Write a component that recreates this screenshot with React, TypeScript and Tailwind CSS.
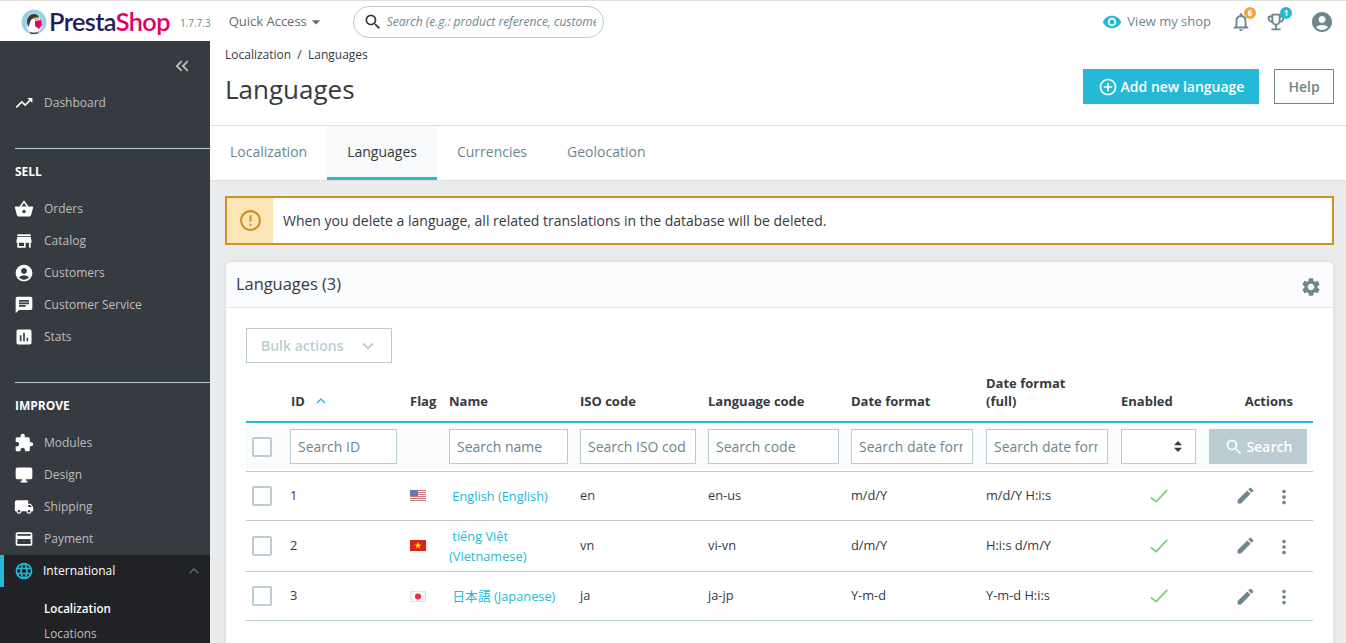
import React from "react";
import {
  MdTrendingUp, MdShoppingBasket, MdStore, MdAccountCircle, MdChat, MdAssessment, MdExtension,
  MdDesktopWindows, MdLocalShipping, MdCreditCard, MdLanguage, MdExpandLess, MdKeyboardDoubleArrowLeft,
  MdNotificationsNone, MdOutlineEmojiEvents, MdVisibility, MdAddCircleOutline, MdErrorOutline, MdSettings,
  MdSearch, MdEdit, MdMoreVert, MdArrowDropDown, MdExpandMore,
} from "react-icons/md";

const font = { fontFamily: '"Open Sans", "Noto Sans CJK JP", sans-serif' };

function NavItem({ icon: Icon, label }: { icon: any; label: string }) {
  return (
    <div className="flex h-8 items-center pl-[14px]">
      <Icon className="h-5 w-5 text-white" />
      <span className="ml-[10px] text-[12px] text-[#bebebe]">{label}</span>
    </div>
  );
}

function Section({ label }: { label: string }) {
  return (
    <div className="ml-[15px] flex h-[45px] items-center border-t border-[#bbcdd2] pt-[1px] text-[12px] font-bold text-white">{label}</div>
  );
}

function Logo() {
  return (
    <svg width="26" height="26" viewBox="0 0 26 26">
      <circle cx="13" cy="13" r="12.5" fill="#9ad3e3" />
      <path d="M6 12c0-5 4-8 8-7 3 .5 5 3 5 6l2 6c-1 4-4 7-8 7-4 0-6-2-7-5z" fill="#fff" />
      <path d="M6 13c0-5 3-8 7-8 3 0 5 2 5 4-3-1-6 0-8 2-1 2-2 5-2 7-1-1-2-3-2-5z" fill="#3a3a44" />
      <path d="M14 12l6-1 1 5-3 4-4-3z" fill="#df0067" />
      <path d="M13 9l4-.5 1 2-4 1z" fill="#f4b13c" />
      <path d="M8 22c2 2 8 2 10 0l-2 3h-6z" fill="#5a4a3c" />
    </svg>
  );
}

function UsFlag() {
  return (
    <svg width="16" height="11" viewBox="0 0 16 11" className="block">
      <rect width="16" height="11" fill="#f4eeee" />
      {[0, 2, 4, 6, 8, 10].map((y) => (
        <rect key={y} y={y} width="16" height="1" fill="#c97a7a" />
      ))}
      <rect width="8" height="6" fill="#6a76b0" />
    </svg>
  );
}
function VnFlag() {
  return (
    <svg width="16" height="11" viewBox="0 0 16 11" className="block">
      <rect width="16" height="11" fill="#da251d" />
      <path d="M8 2l.9 2.4h2.5l-2 1.6.8 2.5L8 7l-2.2 1.5.8-2.5-2-1.6h2.5z" fill="#ffe600" />
    </svg>
  );
}
function JpFlag() {
  return (
    <svg width="16" height="11" viewBox="0 0 16 11" className="block">
      <rect width="16" height="11" fill="#f5f5f5" />
      <rect x="0.5" y="0.5" width="15" height="10" fill="none" stroke="#e4e4e4" />
      <circle cx="8" cy="5.5" r="3" fill="#ee2b3a" />
    </svg>
  );
}

function Check() {
  return (
    <svg width="18" height="14" viewBox="0 0 18 14" fill="none" className="block">
      <path d="M0.7 8.5L6.2 12.6L17.2 0.8" stroke="#78d07d" strokeWidth="1.8" />
    </svg>
  );
}

function SortArrows() {
  return (
    <svg width="8" height="11" viewBox="0 0 8 11" className="block">
      <path d="M4 0L8 4.2H0z M0 6.8H8L4 11z" fill="#363a41" />
    </svg>
  );
}

function Box() {
  return <div className="h-5 w-5 rounded-[2px] border-2 border-[#bbcdd2] bg-white" />;
}

function Filter({ ph, w }: { ph: string; w: string }) {
  return (
    <input
      readOnly
      placeholder={ph}
      className={`h-[35px] ${w} border border-[#bbcdd2] bg-white pl-[7px] pr-[9px] text-[14px] text-[#363a41] outline-none placeholder:text-[#6c868e]`}
    />
  );
}

const th = "px-1.5 pb-[11px] text-left align-bottom text-[13px] font-bold leading-[18px] text-[#363a41]";
const td = "px-1.5 text-[12.8px] text-[#363a41]";

function Row({ id, flag, name, iso, code, df, dff, h, pad }: any) {
  return (
    <tr className={`${h} border-b border-[#bbcdd2]`}>
      <td className={`px-1.5 ${pad}`}><Box /></td>
      <td className={`${td} ${pad}`}>{id}</td>
      <td className={`px-1.5 ${pad}`}>{flag}</td>
      <td className={`px-1.5 text-[12.8px] leading-[20px] text-[#25b9d7] ${pad}`}>{name}</td>
      <td className={`${td} ${pad}`}>{iso}</td>
      <td className={`${td} ${pad}`}>{code}</td>
      <td className={`${td} ${pad}`}>{df}</td>
      <td className={`${td} ${pad}`}>{dff}</td>
      <td className={`px-1.5 ${pad}`}>
        <div className="flex justify-center"><Check /></div>
      </td>
      <td className={`px-1.5 ${pad}`}>
        <div className="flex items-center pl-[26px] text-[#6c868e]">
          <MdEdit className="h-[21px] w-[21px]" />
          <MdMoreVert className="ml-[17px] h-[22px] w-[22px] translate-y-[1px]" />
        </div>
      </td>
    </tr>
  );
}

export default function App() {
  return (
    <div className="flex h-[643px] w-[1346px] flex-col overflow-hidden bg-[#eaebec]" style={font}>
      {/* top bar */}
      <header className="flex h-[41px] shrink-0 items-center border-t border-[#dfdfdf] bg-white pt-[1px]">
        <div className="ml-[21px] flex items-center">
          <Logo />
          <span className="ml-[2px] text-[25.3px] font-semibold leading-none tracking-[-0.6px]" style={{ fontFamily: 'Lato, sans-serif' }}>
            <span className="text-[#251b5b]">Presta</span><span className="text-[#df0067]">Shop</span>
          </span>
        </div>
        <span className="ml-[10px] mt-[3px] text-[10px] text-[#6c868e]">1.7.7.3</span>
        <div className="ml-[18px] flex items-center text-[13px] text-[#5f6b70]">
          Quick Access
          <MdArrowDropDown className="-ml-[1px] h-[20px] w-[20px]" />
        </div>
        <div className="ml-[27px] flex h-8 w-[251px] items-center rounded-full border border-[#bbcdd2] pl-[9px] pr-[7px]">
          <MdSearch className="h-[20px] w-[20px] shrink-0 text-[#363a41]" />
          <input readOnly placeholder="Search (e.g.: product reference, customer name…)" className="ml-[4px] min-w-0 flex-1 text-[12px] italic outline-none placeholder:text-[#6c868e]" />
        </div>
        <div className="ml-auto flex items-center pr-[12px]">
          <MdVisibility className="h-[20px] w-[20px] text-[#25b9d7]" />
          <span className="ml-[5px] text-[13px] text-[#6c868e]">View my shop</span>
          <div className="relative ml-[19px] h-[22px] w-[22px]">
            <MdNotificationsNone className="h-[22px] w-[22px] text-[#6c868e]" />
            <span className="absolute -right-[4px] -top-[4px] flex h-[12px] w-[12px] items-center justify-center rounded-full bg-[#f5a53a] text-[8px] font-bold text-white">6</span>
          </div>
          <div className="relative ml-[13px] h-[22px] w-[22px]">
            <MdOutlineEmojiEvents className="h-[22px] w-[22px] text-[#6c868e]" />
            <span className="absolute -right-[5px] -top-[4px] flex h-[12px] w-[12px] items-center justify-center rounded-full bg-[#25b9d7] text-[8px] font-bold text-white">1</span>
          </div>
          <MdAccountCircle className="ml-[23px] h-6 w-6 text-[#6c868e]" />
        </div>
      </header>

      <div className="flex min-h-0 flex-1">
        {/* sidebar */}
        <aside className="w-[210px] shrink-0 overflow-hidden bg-[#363a41]">
          <div className="flex h-[46px] items-center justify-end pr-[17px] pt-[4px]">
            <MdKeyboardDoubleArrowLeft className="h-[22px] w-[22px] text-[#bebebe]" />
          </div>
          <NavItem icon={MdTrendingUp} label="Dashboard" />
          <div className="h-[29px]" />
          <Section label="SELL" />
          <NavItem icon={MdShoppingBasket} label="Orders" />
          <NavItem icon={MdStore} label="Catalog" />
          <NavItem icon={MdAccountCircle} label="Customers" />
          <NavItem icon={MdChat} label="Customer Service" />
          <NavItem icon={MdAssessment} label="Stats" />
          <div className="h-[29px]" />
          <Section label="IMPROVE" />
          <NavItem icon={MdExtension} label="Modules" />
          <NavItem icon={MdDesktopWindows} label="Design" />
          <NavItem icon={MdLocalShipping} label="Shipping" />
          <NavItem icon={MdCreditCard} label="Payment" />
          <div className="bg-[#202226] pb-4">
            <div className="flex h-8 items-center border-l-4 border-[#25b9d7] pl-[10px] pr-[6px]">
              <MdLanguage className="h-5 w-5 text-[#25b9d7]" />
              <span className="ml-[9px] text-[12px] text-white">International</span>
              <MdExpandLess className="ml-auto h-[20px] w-[20px] text-[#4f6b72]" />
            </div>
            <div className="mt-[10px] pl-[44px] text-[11.6px] font-semibold leading-[24px] text-white">Localization</div>
            <div className="pl-[44px] text-[11.8px] leading-[24px] text-[#bebebe]">Locations</div>
          </div>
        </aside>

        {/* main */}
        <main className="min-w-0 flex-1 overflow-hidden">
          <div className="flex h-[85px] justify-between border-b border-[#dfdfdf] bg-white pl-[15px] pr-[12px]">
            <div>
              <div className="mt-[5px] text-[12px] leading-[18px] text-[#363a41]">Localization&nbsp; /&nbsp; Languages</div>
              <h1 className="mt-[7px] text-[26px] font-normal leading-[36px] text-[#363a41]">Languages</h1>
            </div>
            <div className="mt-[28px] flex h-[35px] items-center gap-[15px]">
              <div className="flex h-[35px] w-[176px] items-center justify-center bg-[#25b9d7] text-[14px] font-semibold text-white">
                <MdAddCircleOutline className="mr-[3px] h-[20px] w-[20px]" />
                Add new language
              </div>
              <div className="flex h-[35px] w-[60px] items-center justify-center border border-[#6c868e] text-[14px] font-semibold text-[#6c868e]">Help</div>
            </div>
          </div>

          <nav className="flex h-[55px] border-b border-[#dfdfdf] bg-white text-[14px] text-[#6c868e]">
            <div className="flex items-center px-5 pb-[4px]">Localization</div>
            <div className="flex items-center border-b-[3px] border-[#25b9d7] bg-[#f8f9fa] px-5 pb-[1px] text-[#363a41]">Languages</div>
            <div className="flex items-center px-5 pb-[4px]">Currencies</div>
            <div className="flex items-center px-5 pb-[4px]">Geolocation</div>
          </nav>

          <div className="mx-[15px] mt-[15px] flex h-[49px] w-[1109px] border-2 border-[#cd9321] bg-white">
            <div className="flex w-[46px] items-center justify-center bg-[#fde5b8]">
              <MdErrorOutline className="h-[25px] w-[25px] text-[#cd9321]" />
            </div>
            <div className="ml-[10px] flex items-center text-[14px] text-[#363a41]">When you delete a language, all related translations in the database will be deleted.</div>
          </div>

          <section className="ml-[16px] mt-[17px] w-[1107px] rounded-[5px] bg-white shadow-[0_0_4px_rgba(0,0,0,0.1)]">
            <div className="flex h-[46px] items-center justify-between rounded-t-[5px] border-b border-[#dbe6e9] bg-[#fafbfc] pl-[10px] pr-[11px]">
              <span className="text-[16.4px] text-[#363a41]">Languages (3)</span>
              <MdSettings className="mt-[5px] h-[22px] w-[22px] text-[#6c868e]" />
            </div>
            <div className="px-5 pt-[20px] pb-10">
              <div className="flex h-[35px] w-[146px] items-center justify-between border border-[#bbcdd2] pl-[14px] pr-[12px] text-[14px] font-semibold text-[#bbcdd2]">
                Bulk actions
                <MdExpandMore className="h-[22px] w-[22px]" />
              </div>
              <table className="mt-[10px] w-[1067px] table-fixed border-collapse">
                <colgroup>
                  <col className="w-[38px]" />
                  <col className="w-[120px]" />
                  <col className="w-[39px]" />
                  <col className="w-[131px]" />
                  <col className="w-[128px]" />
                  <col className="w-[143px]" />
                  <col className="w-[135px]" />
                  <col className="w-[135px]" />
                  <col className="w-[88px]" />
                  <col className="w-[110px]" />
                </colgroup>
                <thead>
                  <tr className="h-[49px] border-b-2 border-[#25b9d7]">
                    <th className={th}></th>
                    <th className={`${th} pl-[7px]`}>
                      <span className="inline-flex items-center">ID<MdExpandLess className="ml-[7px] h-[18px] w-[18px] text-[#25b9d7]" /></span>
                    </th>
                    <th className={th}>Flag</th>
                    <th className={th}>Name</th>
                    <th className={th}>ISO code</th>
                    <th className={th}>Language code</th>
                    <th className={th}>Date format</th>
                    <th className={th}>Date format<br />(full)</th>
                    <th className={th}>Enabled</th>
                    <th className={`${th} pr-[20px] text-right`}>Actions</th>
                  </tr>
                </thead>
                <tbody>
                  <tr className="h-[49px] border-b border-[#bbcdd2] bg-[#fafbfc]">
                    <td className="px-1.5"><Box /></td>
                    <td className="px-1.5"><Filter ph="Search ID" w="w-[107px]" /></td>
                    <td className="px-1.5"></td>
                    <td className="px-1.5"><Filter ph="Search name" w="w-[119px]" /></td>
                    <td className="px-1.5"><Filter ph="Search ISO code" w="w-[116px]" /></td>
                    <td className="px-1.5"><Filter ph="Search code" w="w-[131px]" /></td>
                    <td className="px-1.5"><Filter ph="Search date format" w="w-[122px]" /></td>
                    <td className="px-1.5"><Filter ph="Search date format" w="w-[122px]" /></td>
                    <td className="px-1.5">
                      <div className="flex h-[35px] w-[75px] items-center justify-end border border-[#bbcdd2] bg-white pr-[13px]">
                        <SortArrows />
                      </div>
                    </td>
                    <td className="px-1.5">
                      <div className="flex h-[35px] w-[98px] items-center justify-center bg-[#bbcdd2] text-[14px] font-semibold text-white">
                        <MdSearch className="mr-[3px] h-[20px] w-[20px]" />
                        Search
                      </div>
                    </td>
                  </tr>
                  <Row h="h-[49px]" pad="" id="1" flag={<UsFlag />} name={<>&nbsp;English (English)</>} iso="en" code="en-us" df="m/d/Y" dff="m/d/Y H:i:s" />
                  <Row h="h-[51px]" pad="" id="2" flag={<VnFlag />} name={<>&nbsp;tiếng Việt (Vietnamese)</>} iso="vn" code="vi-vn" df="d/m/Y" dff="H:i:s d/m/Y" />
                  <Row h="h-[49px]" pad="pt-[1px]" id="3" flag={<JpFlag />} name={<>&nbsp;日本語 (Japanese)</>} iso="ja" code="ja-jp" df="Y-m-d" dff="Y-m-d H:i:s" />
                </tbody>
              </table>
            </div>
          </section>
        </main>
      </div>
    </div>
  );
}
